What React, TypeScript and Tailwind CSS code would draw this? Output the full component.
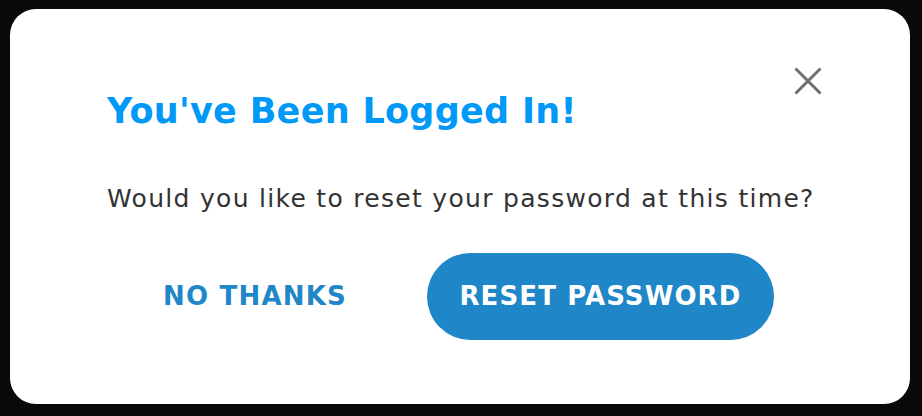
import React from "react";

const App = () => {
  return (
    <div className="w-[922px] h-[416px] bg-[#0b0908] pl-[10px] pt-[9px] font-['DejaVu_Sans',sans-serif]">
      <div className="w-[900px] h-[395px] rounded-[26px] bg-white pl-[97px] pr-[88px] pt-[58px]">
        <div className="flex items-start justify-between">
          <h1 className="mt-[22px] text-[35px] font-bold leading-[44px] tracking-[0.3px] text-[#0099f7]">
            You've Been Logged In!
          </h1>
          <button className="text-[#6e6e6e]">
            <svg width="28" height="28" viewBox="0 0 28 28" fill="none">
              <path d="M1.5 1.5L26.5 26.5M26.5 1.5L1.5 26.5" stroke="currentColor" strokeWidth="3" />
            </svg>
          </button>
        </div>
        <p className="mt-[50px] text-[25px] leading-[32px] tracking-[1.3px] text-[#333333]">
          Would you like to reset your password at this time?
        </p>
        <div className="mt-[38px] flex items-center">
          <button className="ml-[56px] text-[26px] font-bold tracking-[1.2px] text-[#1f87c8]">
            NO THANKS
          </button>
          <button className="ml-[80px] h-[87px] w-[347px] rounded-full bg-[#1f86c7] text-[26px] font-bold tracking-[1.1px] text-white">
            RESET PASSWORD
          </button>
        </div>
      </div>
    </div>
  );
};

export default App;
